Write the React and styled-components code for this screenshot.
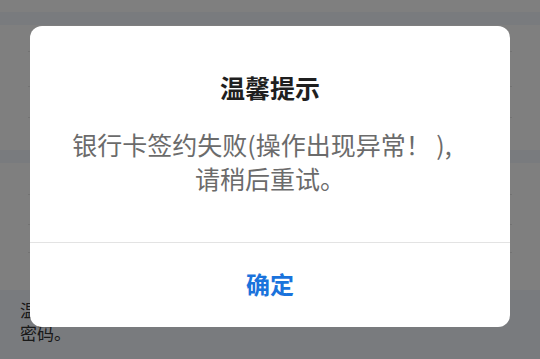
import React from 'react';
import styled, { createGlobalStyle } from 'styled-components';

const GlobalStyle = createGlobalStyle`
  html, body {
    margin: 0;
    padding: 0;
  }
  body {
    font-family: "Noto Sans CJK SC", "Noto Sans", sans-serif;
  }
`;

const Page = styled.div`
  position: relative;
  width: 540px;
  height: 359px;
  overflow: hidden;
  background: #f2f6fc;
  display: flex;
  flex-direction: column;
  gap: 13px;
`;

const Card = styled.div`
  background: #ffffff;
  height: ${props => props.h}px;
  display: flex;
  flex-direction: column;
`;

const Row = styled.div`
  height: ${props => props.h}px;
  margin: 0 28px;
  border-bottom: 1px solid #e6e6e6;
  box-sizing: border-box;
`;

const Notice = styled.p`
  margin: -13px 0 0;
  padding: 8px 35px 0 20px;
  font-size: 17px;
  line-height: 23px;
  color: #333333;
`;

const Overlay = styled.div`
  position: absolute;
  inset: 0;
  background: rgba(0, 0, 0, 0.5);
  display: flex;
  justify-content: center;
  align-items: flex-start;
  padding-top: 26px;
`;

const Dialog = styled.div`
  width: 480px;
  height: 301px;
  background: #ffffff;
  border-radius: 12px;
  display: flex;
  flex-direction: column;
  overflow: hidden;
`;

const Body = styled.div`
  height: 217px;
  box-sizing: border-box;
  padding: 44px 30px 0;
  border-bottom: 1px solid #e3e3e3;
  text-align: center;
`;

const Title = styled.h2`
  margin: 0;
  font-size: 25px;
  line-height: 34px;
  font-weight: 700;
  color: #1f1f1f;
`;

const Message = styled.p`
  margin: 23px 0 0;
  font-size: 25px;
  line-height: 34px;
  color: #6b6b6b;
`;

const Line = styled.span`
  display: block;
  padding-right: ${props => props.trail || 0}px;
`;

const Action = styled.button`
  flex: 1;
  border: 0;
  padding: 0 0 4px;
  background: transparent;
  font-family: inherit;
  font-size: 24px;
  font-weight: 700;
  color: #1a73dc;
  cursor: pointer;
`;

export default function App() {
  return (
    <>
      <GlobalStyle />
      <Page>
        <Card h={12} />
        <Card h={125}>
          <Row h={27} />
          <Row h={35} />
          <Row h={31} />
        </Card>
        <Card h={127}>
          <Row h={32} />
          <Row h={30} />
          <Row h={28} />
        </Card>
        <Notice>温馨提示：为保障资金安全，请勿向他人泄露短信验证码和支付密码。</Notice>
        <Overlay>
          <Dialog>
            <Body>
              <Title>温馨提示</Title>
              <Message>
                <Line trail={16}>银行卡签约失败(操作出现异常！ ),</Line>
                <Line>请稍后重试。</Line>
              </Message>
            </Body>
            <Action>确定</Action>
          </Dialog>
        </Overlay>
      </Page>
    </>
  );
}
